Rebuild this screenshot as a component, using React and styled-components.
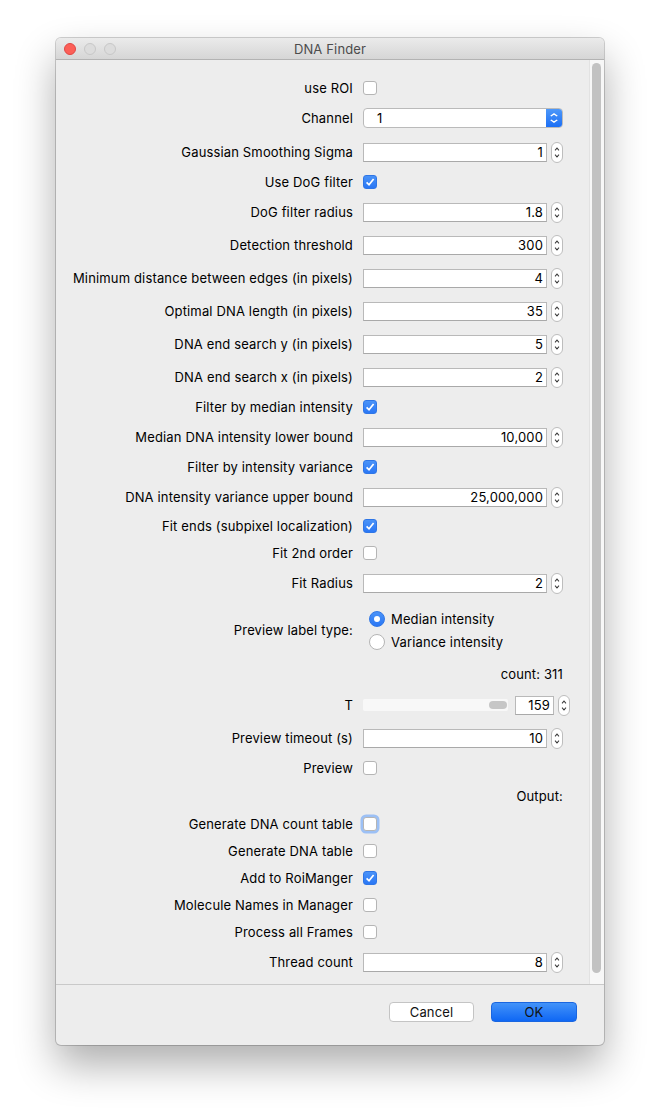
import React from 'react';
import styled, { createGlobalStyle, css } from 'styled-components';

const GlobalStyle = createGlobalStyle`
  body {
    margin: 0;
    background: #ffffff;
    font-family: Inter, "Liberation Sans", sans-serif;
    font-size: 13px;
    letter-spacing: 0.15px;
    color: #000;
  }
`;

const Page = styled.div`
  padding: 38px 0 0 56px;
  height: 1081px;
`;

const Window = styled.div`
  width: 548px;
  height: 1007px;
  border-radius: 5px;
  background: #ededed;
  overflow: hidden;
  box-shadow: 0 0 0 1px rgba(0, 0, 0, 0.18), 0 20px 40px rgba(0, 0, 0, 0.32);
  display: flex;
  flex-direction: column;
`;

const TitleBar = styled.div`
  height: 21px;
  flex: none;
  display: flex;
  align-items: center;
  position: relative;
  background: linear-gradient(#ebebeb, #d6d6d6);
  border-bottom: 1px solid #b3b3b3;
`;

const Lights = styled.div`
  display: flex;
  gap: 8px;
  padding-left: 8px;
`;

const Light = styled.span`
  width: 12px;
  height: 12px;
  border-radius: 50%;
  box-sizing: border-box;
  background: ${(p) => (p.$red ? '#fc5f57' : '#dcdcdc')};
  border: 1px solid ${(p) => (p.$red ? '#df4744' : '#c7c7c7')};
`;

const Title = styled.div`
  position: absolute;
  left: 0;
  right: 0;
  text-align: center;
  font-size: 13px;
  color: #4c4c4c;
  pointer-events: none;
`;

const ScrollPane = styled.div`
  height: 924px;
  flex: none;
  display: flex;
  border-bottom: 1px solid #c9c9c9;
`;

const Viewport = styled.div`
  flex: 1;
  padding-top: 17px;
`;

const ScrollTrack = styled.div`
  width: 15px;
  flex: none;
  background: #f7f7f7;
  border-left: 1px solid #e2e2e2;
  padding: 3px 0 0 2px;
  box-sizing: border-box;
`;

const Thumb = styled.div`
  width: 9px;
  height: 910px;
  border-radius: 5px;
  background: #c2c2c2;
`;

const Row = styled.div`
  display: flex;
  align-items: center;
  height: ${(p) => p.$h || 22}px;
  margin-top: ${(p) => p.$gap || 0}px;
`;

const Label = styled.div`
  width: 297px;
  flex: none;
  text-align: right;
  white-space: nowrap;
`;

const Control = styled.div`
  margin-left: 10px;
  display: flex;
  align-items: center;
  gap: 4px;
`;

const RightText = styled.div`
  margin-left: 10px;
  width: 200px;
  text-align: right;
`;

const Field = styled.div`
  width: ${(p) => p.$w || 184}px;
  height: 19px;
  box-sizing: border-box;
  background: #fff;
  border: 1px solid #b9b9b9;
  border-bottom-color: #a9a9a9;
  text-align: right;
  padding-right: 3px;
  line-height: 17px;
`;

const SpinBox = styled.div`
  width: 12px;
  height: 21px;
  box-sizing: border-box;
  border: 1px solid #bdbdbd;
  border-radius: 6px;
  background: #fff;
  display: flex;
`;

const Check = styled.div`
  width: 14px;
  height: 14px;
  box-sizing: border-box;
  border-radius: 3px;
  display: flex;
  align-items: center;
  justify-content: center;
  ${(p) =>
    p.$on
      ? css`
          background: linear-gradient(#4a93f8, #2a77f5);
          border: 1px solid #2f76e6;
        `
      : css`
          background: #fff;
          border: 1px solid #b5b5b5;
        `}
  ${(p) => p.$focus && css`box-shadow: 0 0 0 2.5px #9cc0f5;`}
`;

const Select = styled.div`
  width: 200px;
  height: 20px;
  box-sizing: border-box;
  display: flex;
  border-radius: 4px;
  border: 1px solid #bababa;
  background: #fff;
  overflow: hidden;
`;

const SelectValue = styled.div`
  flex: 1;
  padding-left: 13px;
  line-height: 18px;
`;

const SelectButton = styled.div`
  width: 16px;
  background: linear-gradient(#4d98f9, #1c6ff5);
  display: flex;
`;

const RadioGroup = styled.div`
  margin-left: 16px;
  display: flex;
  flex-direction: column;
  gap: 7px;
`;

const RadioRow = styled.div`
  display: flex;
  align-items: center;
  gap: 6px;
`;

const Radio = styled.div`
  width: 16px;
  height: 16px;
  box-sizing: border-box;
  border-radius: 50%;
  display: flex;
  align-items: center;
  justify-content: center;
  ${(p) =>
    p.$on
      ? css`
          background: linear-gradient(#4a93f8, #2a77f5);
          border: 1px solid #2f76e6;
        `
      : css`
          background: #fff;
          border: 1px solid #b5b5b5;
        `}
`;

const Dot = styled.span`
  width: 6px;
  height: 6px;
  border-radius: 50%;
  background: #fff;
`;

const Slider = styled.div`
  width: 144px;
  height: 12px;
  background: #f8f8f8;
  border-radius: 2px;
  display: flex;
  align-items: center;
  justify-content: flex-end;
  padding-right: 1px;
  margin-right: 3px;
`;

const Knob = styled.div`
  width: 18px;
  height: 8px;
  border-radius: 4px;
  background: #c6c6c6;
`;

const Footer = styled.div`
  flex: 1;
  display: flex;
  justify-content: flex-end;
  align-items: flex-start;
  padding: 17px 27px 0 0;
  gap: 17px;
`;

const Button = styled.div`
  width: ${(p) => p.$w}px;
  height: 20px;
  box-sizing: border-box;
  border-radius: 4px;
  text-align: center;
  line-height: 18px;
  color: #111;
  ${(p) =>
    p.$primary
      ? css`
          background: linear-gradient(#4393f9, #0f67f4);
          border: 1px solid #1a66e0;
        `
      : css`
          background: #fff;
          border: 1px solid #c4c4c4;
        `}
`;

const Chevrons = ({ color = '#3a3a3a', h = 19 }) => (
  <svg width="100%" height={h} viewBox="0 0 12 20" preserveAspectRatio="none">
    <path d="M3.6 7.8 L6 5.4 L8.4 7.8" fill="none" stroke={color} strokeWidth="1.2" />
    <path d="M3.6 12.2 L6 14.6 L8.4 12.2" fill="none" stroke={color} strokeWidth="1.2" />
  </svg>
);

const Tick = () => (
  <svg width="12" height="12" viewBox="0 0 12 12">
    <path d="M2.6 6.4 L5 8.8 L9.6 3" fill="none" stroke="#fff" strokeWidth="1.7" />
  </svg>
);

const Spinner = () => (
  <SpinBox>
    <Chevrons />
  </SpinBox>
);

const NumberRow = ({ label, value, gap }) => (
  <Row $gap={gap}>
    <Label>{label}</Label>
    <Control>
      <Field>{value}</Field>
      <Spinner />
    </Control>
  </Row>
);

const CheckRow = ({ label, on, focus, gap }) => (
  <Row $gap={gap}>
    <Label>{label}</Label>
    <Control>
      <Check $on={on} $focus={focus}>{on && <Tick />}</Check>
    </Control>
  </Row>
);

const App = () => (
  <>
    <GlobalStyle />
    <Page>
      <Window>
        <TitleBar>
          <Lights>
            <Light $red />
            <Light />
            <Light />
          </Lights>
          <Title>DNA Finder</Title>
        </TitleBar>
        <ScrollPane>
          <Viewport>
            <CheckRow label="use ROI" />
            <Row $gap={8}>
              <Label>Channel</Label>
              <Control>
                <Select>
                  <SelectValue>1</SelectValue>
                  <SelectButton>
                    <Chevrons color="#fff" h={18} />
                  </SelectButton>
                </Select>
              </Control>
            </Row>
            <NumberRow gap={12} label="Gaussian Smoothing Sigma" value="1" />
            <CheckRow gap={8} label="Use DoG filter" on />
            <NumberRow gap={8} label="DoG filter radius" value="1.8" />
            <NumberRow gap={11} label="Detection threshold" value="300" />
            <NumberRow gap={11} label="Minimum distance between edges (in pixels)" value="4" />
            <NumberRow gap={11} label="Optimal DNA length (in pixels)" value="35" />
            <NumberRow gap={11} label="DNA end search y (in pixels)" value="5" />
            <NumberRow gap={11} label="DNA end search x (in pixels)" value="2" />
            <CheckRow gap={8} label="Filter by median intensity" on />
            <NumberRow gap={8} label="Median DNA intensity lower bound" value="10,000" />
            <CheckRow gap={8} label="Filter by intensity variance" on />
            <NumberRow gap={8} label="DNA intensity variance upper bound" value="25,000,000" />
            <CheckRow gap={7} label="Fit ends (subpixel localization)" on />
            <CheckRow gap={5} label="Fit 2nd order" />
            <NumberRow gap={8} label="Fit Radius" value="2" />
            <Row $gap={13} $h={46}>
              <Label>Preview label type:</Label>
              <RadioGroup>
                <RadioRow>
                  <Radio $on>
                    <Dot />
                  </Radio>
                  Median intensity
                </RadioRow>
                <RadioRow>
                  <Radio />
                  Variance intensity
                </RadioRow>
              </RadioGroup>
            </Row>
            <Row $gap={10}>
              <Label />
              <RightText>count: 311</RightText>
            </Row>
            <Row $gap={9}>
              <Label>T</Label>
              <Control>
                <Slider>
                  <Knob />
                </Slider>
                <Field $w={39}>159</Field>
                <Spinner />
              </Control>
            </Row>
            <NumberRow gap={11} label="Preview timeout (s)" value="10" />
            <CheckRow gap={8} label="Preview" />
            <Row $gap={6}>
              <Label />
              <RightText>Output:</RightText>
            </Row>
            <CheckRow gap={6} label="Generate DNA count table" focus />
            <CheckRow gap={5} label="Generate DNA table" />
            <CheckRow gap={5} label="Add to RoiManger" on />
            <CheckRow gap={5} label="Molecule Names in Manager" />
            <CheckRow gap={5} label="Process all Frames" />
            <NumberRow gap={8} label="Thread count" value="8" />
          </Viewport>
          <ScrollTrack>
            <Thumb />
          </ScrollTrack>
        </ScrollPane>
        <Footer>
          <Button $w={85}>Cancel</Button>
          <Button $w={86} $primary>
            OK
          </Button>
        </Footer>
      </Window>
    </Page>
  </>
);

export default App;
